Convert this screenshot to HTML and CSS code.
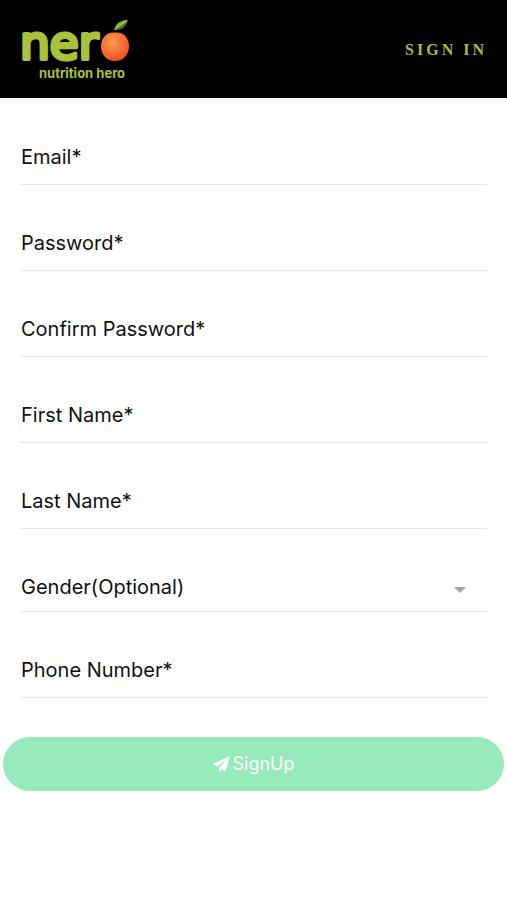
FILE: index.html
```html
<!DOCTYPE html>
<html lang="en">
<head>
<meta charset="utf-8">
<meta name="viewport" content="width=device-width, initial-scale=1">
<title>nero - Sign Up</title>
<link rel="stylesheet" href="styles.css">
</head>
<body>
<header class="topbar">
  <a class="logo" href="#" aria-label="nero nutrition hero">
    <svg width="112" height="64" viewBox="0 0 112 64">
      <defs>
        <radialGradient id="peel" cx="0.4" cy="0.35" r="0.7">
          <stop offset="0" stop-color="#ff9a55"/>
          <stop offset="0.5" stop-color="#fb7434"/>
          <stop offset="1" stop-color="#e84f24"/>
        </radialGradient>
      </defs>
      <text class="logo-name" x="0" y="41">ner</text>
      <text class="logo-tagline" x="19" y="60">nutrition hero</text>
      <path fill="url(#peel)" d="M95 14.500C103 13.500 109 19 109 28C109 37 103 43 95 43C87 43 81 37 81 28.500C81 19.500 87 13.500 95 14.500Z"/>
      <path fill="#8fae3a" d="M94.500 11.500C95.500 5.500 100 2.500 107.500 2C106.500 8.500 102 12 94.500 11.500Z"/>
      <path fill="#41702f" d="M94.500 11.500C98 10.500 104 6.500 107.500 2C106.500 8.500 102 12 94.500 11.500Z"/>
      <path fill="none" stroke="#b9cf72" stroke-width="0.800" d="M94 12C97 9.500 102 7 107 2.500"/>
    </svg>
  </a>
  <a class="signin" href="#">SIGN IN</a>
</header>
<main>
  <form class="signup">
    <div class="fields">
      <div class="field"><label for="email">Email*</label><input id="email" type="email"></div>
      <div class="field"><label for="password">Password*</label><input id="password" type="password"></div>
      <div class="field"><label for="confirm">Confirm Password*</label><input id="confirm" type="password"></div>
      <div class="field"><label for="first">First Name*</label><input id="first" type="text"></div>
      <div class="field"><label for="last">Last Name*</label><input id="last" type="text"></div>
      <div class="field field-select"><label for="gender">Gender(Optional)</label><select id="gender"><option value=""></option></select>
        <svg class="caret" width="12" height="6" viewBox="0 0 12 6" aria-hidden="true"><path d="M0 0H12L6 6Z"/></svg>
      </div>
      <div class="field"><label for="phone">Phone Number*</label><input id="phone" type="tel"></div>
    </div>
    <button class="submit" type="button">
      <svg width="17" height="17" viewBox="0 0 17 17" aria-hidden="true"><path d="M17 0L0 8L4.500 10.500L13.500 3.500L6.500 11.500V16.500L9 13.300L12.500 15.500Z"/></svg>
      <span>SignUp</span>
    </button>
  </form>
</main>
</body>
</html>
```
FILE: styles.css
```css
* {
  box-sizing: border-box;
}

body {
  margin: 0;
  background: #fff;
  color: #111;
  font-family: Inter, "Liberation Sans", sans-serif;
  font-size: 20px;
  line-height: 24px;
}

.topbar {
  display: flex;
  align-items: center;
  justify-content: space-between;
  padding: 18px 20px 16px;
  background: #000;
}

.logo,
.logo svg {
  display: block;
}

.logo svg {
  overflow: visible;
}

.logo-name {
  fill: #a9c23c;
  stroke: #a9c23c;
  stroke-width: 4px;
  stroke-linejoin: round;
  font: 47px "DejaVu Sans", sans-serif;
}

.logo-tagline {
  fill: #a9c23c;
  font: 700 13px Inter, sans-serif;
}

.signin {
  color: #a9bd3c;
  font: bold 16px "Liberation Serif", serif;
  letter-spacing: 3px;
  text-decoration: none;
}

.fields {
  display: flex;
  flex-direction: column;
  gap: 31px;
  padding: 32px 20px 39px;
}

.field {
  display: flex;
  align-items: center;
  padding: 15px 1px;
  border-bottom: 1px solid #e8e8e8;
}

.field input,
.field select {
  flex: 1;
  min-width: 0;
  height: 24px;
  padding: 0 0 0 8px;
  border: 0;
  outline: 0;
  background: transparent;
  color: inherit;
  font: inherit;
  appearance: none;
}

.field-select {
  padding-bottom: 12px;
}

.caret {
  margin: 6px 20px 0 0;
  fill: #a5a5a5;
  pointer-events: none;
}

.submit {
  display: flex;
  align-items: center;
  justify-content: center;
  gap: 3px;
  width: calc(100% - 6px);
  height: 54px;
  margin: 0 3px;
  border: 0;
  border-radius: 27px;
  background: #97eab9;
  color: #fff;
  font: inherit;
  font-size: 18px;
}

.submit svg {
  fill: #fff;
}
```
